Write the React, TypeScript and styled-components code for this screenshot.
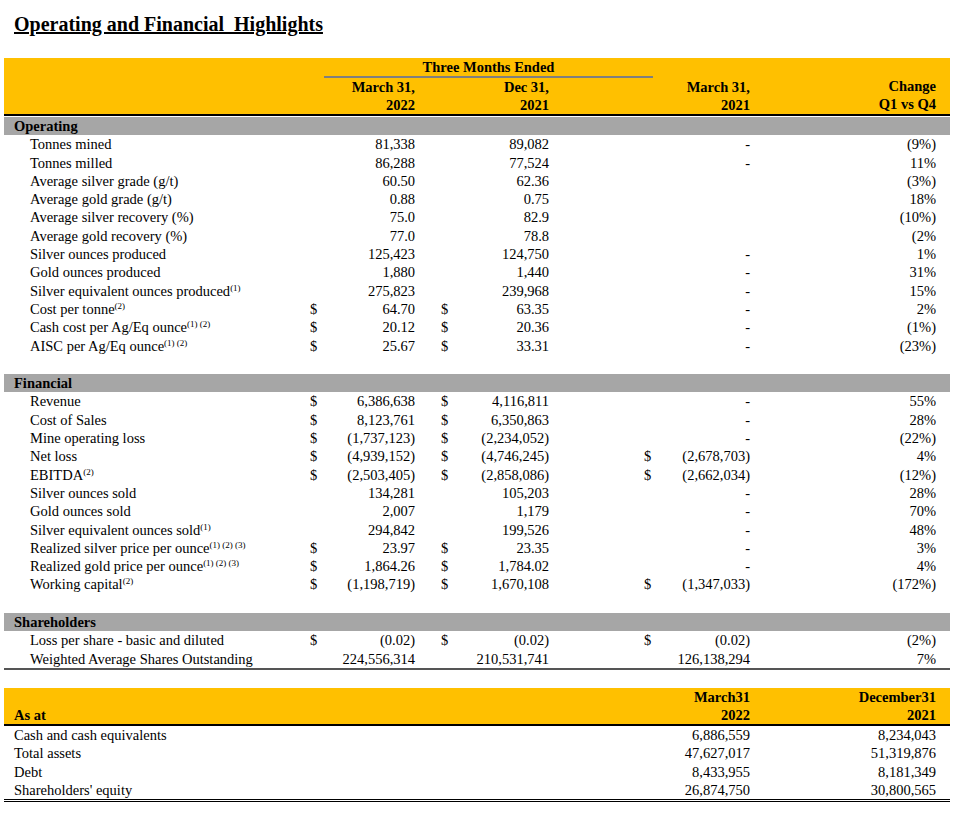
import React from "react";
import styled, { createGlobalStyle } from "styled-components";

const Global = createGlobalStyle`
  body { margin: 0; background: #fff; font-family: "Liberation Serif", "Times New Roman", serif; color: #000; }
`;

const COLS = "300px 20px 95px 31px 104px 99px 106px 191px";

const Page = styled.div`
  padding: 12px 0 0 4px;
  width: 946px;
`;
const Title = styled.h1`
  margin: 0 0 22px 10px;
  font-size: 20px;
  font-weight: bold;
  text-decoration: underline;
  white-space: pre;
  line-height: 24px;
`;
const Table = styled.div<{ $double?: boolean }>`
  display: flex;
  flex-direction: column;
  font-size: 14.5px;
  border-bottom: ${(p) => (p.$double ? "3px double #000" : "2px solid #555")};
`;
const Head = styled.div`
  background: #ffc000;
  border-bottom: 2px solid #000;
  font-weight: bold;
  display: grid;
  grid-template-columns: ${COLS};
`;
const Row = styled.div<{ $gray?: boolean; $blank?: boolean }>`
  display: grid;
  grid-template-columns: ${COLS};
  height: 18.3px;
  line-height: 18.3px;
  white-space: nowrap;
  background: ${(p) => (p.$gray ? "#a6a6a6" : "transparent")};
  font-weight: ${(p) => (p.$gray ? "bold" : "normal")};
  margin-top: ${(p) => (p.$gray ? "1px" : "0")};
`;
const Cell = styled.div<{ $right?: boolean; $pl?: number; $pr?: number; $span?: string }>`
  text-align: ${(p) => (p.$right ? "right" : "left")};
  padding-left: ${(p) => p.$pl ?? 0}px;
  padding-right: ${(p) => p.$pr ?? 0}px;
  ${(p) => (p.$span ? `grid-column: ${p.$span};` : "")}
`;
const HeadCell = styled.div<{ $span?: string; $pr?: number; $center?: boolean; $line?: boolean; $end?: boolean }>`
  ${(p) => (p.$span ? `grid-column: ${p.$span};` : "")}
  text-align: ${(p) => (p.$center ? "center" : "right")};
  padding-right: ${(p) => p.$pr ?? 0}px;
  line-height: 18px;
  align-self: ${(p) => (p.$end ? "end" : "stretch")};
  ${(p) => (p.$line ? "border-bottom: 2px solid #7f7f7f;" : "")}
`;
const Sup = styled.sup`
  font-size: 9px;
  vertical-align: 5px;
  line-height: 0;
`;

type R = [string, string?, string?, string?, string?, string?, string?, string?];

const operating: R[] = [
  ["Tonnes mined", "", "81,338", "", "89,082", "", "-", "(9%)"],
  ["Tonnes milled", "", "86,288", "", "77,524", "", "-", "11%"],
  ["Average silver grade (g/t)", "", "60.50", "", "62.36", "", "", "(3%)"],
  ["Average gold grade (g/t)", "", "0.88", "", "0.75", "", "", "18%"],
  ["Average silver recovery (%)", "", "75.0", "", "82.9", "", "", "(10%)"],
  ["Average gold recovery (%)", "", "77.0", "", "78.8", "", "", "(2%"],
  ["Silver ounces produced", "", "125,423", "", "124,750", "", "-", "1%"],
  ["Gold ounces produced", "", "1,880", "", "1,440", "", "-", "31%"],
  ["Silver equivalent ounces produced|(1)", "", "275,823", "", "239,968", "", "-", "15%"],
  ["Cost per tonne|(2)", "$", "64.70", "$", "63.35", "", "-", "2%"],
  ["Cash cost per Ag/Eq ounce|(1) (2)", "$", "20.12", "$", "20.36", "", "-", "(1%)"],
  ["AISC per Ag/Eq ounce|(1) (2)", "$", "25.67", "$", "33.31", "", "-", "(23%)"],
];
const financial: R[] = [
  ["Revenue", "$", "6,386,638", "$", "4,116,811", "", "-", "55%"],
  ["Cost of Sales", "$", "8,123,761", "$", "6,350,863", "", "-", "28%"],
  ["Mine operating loss", "$", "(1,737,123)", "$", "(2,234,052)", "", "-", "(22%)"],
  ["Net loss", "$", "(4,939,152)", "$", "(4,746,245)", "$", "(2,678,703)", "4%"],
  ["EBITDA|(2)", "$", "(2,503,405)", "$", "(2,858,086)", "$", "(2,662,034)", "(12%)"],
  ["Silver ounces sold", "", "134,281", "", "105,203", "", "-", "28%"],
  ["Gold ounces sold", "", "2,007", "", "1,179", "", "-", "70%"],
  ["Silver equivalent ounces sold|(1)", "", "294,842", "", "199,526", "", "-", "48%"],
  ["Realized silver price per ounce|(1) (2) (3)", "$", "23.97", "$", "23.35", "", "-", "3%"],
  ["Realized gold price per ounce|(1) (2) (3)", "$", "1,864.26", "$", "1,784.02", "", "-", "4%"],
  ["Working capital|(2)", "$", "(1,198,719)", "$", "1,670,108", "$", "(1,347,033)", "(172%)"],
];
const shareholders: R[] = [
  ["Loss per share - basic and diluted", "$", "(0.02)", "$", "(0.02)", "$", "(0.02)", "(2%)"],
  ["Weighted Average Shares Outstanding", "", "224,556,314", "", "210,531,741", "", "126,138,294", "7%"],
];
const asAt = [
  ["Cash and cash equivalents", "6,886,559", "8,234,043"],
  ["Total assets", "47,627,017", "51,319,876"],
  ["Debt", "8,433,955", "8,181,349"],
  ["Shareholders' equity", "26,874,750", "30,800,565"],
];

const Label = ({ t }: { t: string }) => {
  const [a, s] = t.split("|");
  return (
    <Cell $pl={26}>
      {a}
      {s && <Sup>{s}</Sup>}
    </Cell>
  );
};

const DataRow = ({ r }: { r: R }) => (
  <Row>
    <Label t={r[0]} />
    <Cell $pl={6}>{r[1]}</Cell>
    <Cell $right $pr={4}>{r[2]}</Cell>
    <Cell $pl={22}>{r[3]}</Cell>
    <Cell $right $pr={5}>{r[4]}</Cell>
    <Cell $pl={90}>{r[5]}</Cell>
    <Cell $right $pr={9}>{r[6]}</Cell>
    <Cell $right $pr={14}>{r[7]}</Cell>
  </Row>
);

const Section = ({ name, rows }: { name: string; rows: R[] }) => (
  <>
    <Row $gray>
      <Cell $pl={10} $span="1 / -1">{name}</Cell>
    </Row>
    {rows.map((r) => (
      <DataRow key={r[0]} r={r} />
    ))}
  </>
);

const Blank = styled.div`
  height: 18.3px;
`;
const Gap = styled.div`
  height: 18px;
`;

export default function App() {
  return (
    <Page>
      <Global />
      <Title>{"Operating and Financial  Highlights"}</Title>
      <Table>
        <Head>
          <HeadCell $span="3 / 7" $center $line>
            Three Months Ended
          </HeadCell>
          <HeadCell $span="1 / 2" />
          <HeadCell $span="3 / 4" $pr={4}>March 31,<br />2022</HeadCell>
          <HeadCell $span="5 / 6" $pr={5}>Dec 31,<br />2021</HeadCell>
          <HeadCell $span="7 / 8" $pr={9}>March 31,<br />2021</HeadCell>
          <HeadCell $span="8 / 9" $pr={14} style={{ gridRow: "1 / 3", paddingTop: 19 }}>Change<br />Q1 vs Q4</HeadCell>
        </Head>
        <Section name="Operating" rows={operating} />
        <Blank />
        <Section name="Financial" rows={financial} />
        <Blank />
        <Section name="Shareholders" rows={shareholders} />
      </Table>
      <Gap />
      <Table $double>
        <Head>
          <HeadCell $span="1 / 3" $end style={{ textAlign: "left", paddingLeft: 10 }}>As at</HeadCell>
          <HeadCell $span="6 / 8" $pr={9}>March31<br />2022</HeadCell>
          <HeadCell $span="8 / 9" $pr={14}>December31<br />2021</HeadCell>
        </Head>
        {asAt.map((r) => (
          <Row key={r[0]}>
            <Cell $pl={10} $span="1 / 6">{r[0]}</Cell>
            <Cell $right $pr={9} $span="6 / 8">{r[1]}</Cell>
            <Cell $right $pr={14}>{r[2]}</Cell>
          </Row>
        ))}
      </Table>
    </Page>
  );
}
